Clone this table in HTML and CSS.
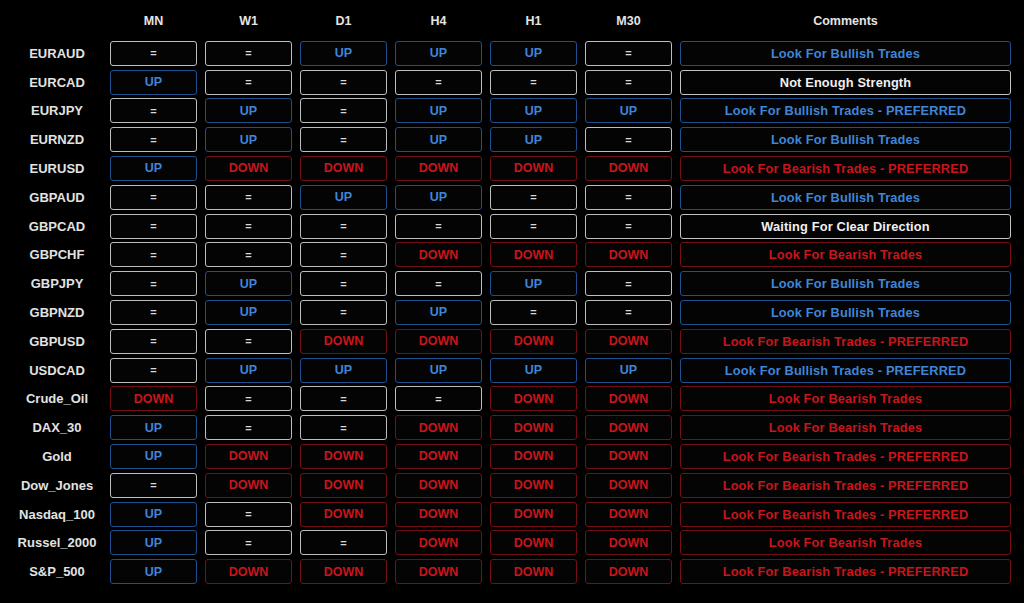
FILE: index.html
```html
<!DOCTYPE html>
<html>
<head>
<meta charset="utf-8">
<link rel="stylesheet" href="styles.css">
</head>
<body>
<div class="board">
  <div class="hd"></div><div class="hd">MN</div><div class="hd">W1</div><div class="hd">D1</div><div class="hd">H4</div><div class="hd">H1</div><div class="hd">M30</div><div class="hd">Comments</div>

  <div class="sym">EURAUD</div><div class="c n">=</div><div class="c n">=</div><div class="c u">UP</div><div class="c u">UP</div><div class="c u">UP</div><div class="c n">=</div><div class="c cm u">Look For Bullish Trades</div>
  <div class="sym">EURCAD</div><div class="c u">UP</div><div class="c n">=</div><div class="c n">=</div><div class="c n">=</div><div class="c n">=</div><div class="c n">=</div><div class="c cm w">Not Enough Strength</div>
  <div class="sym">EURJPY</div><div class="c n">=</div><div class="c u">UP</div><div class="c n">=</div><div class="c u">UP</div><div class="c u">UP</div><div class="c u">UP</div><div class="c cm u">Look For Bullish Trades - PREFERRED</div>
  <div class="sym">EURNZD</div><div class="c n">=</div><div class="c u">UP</div><div class="c n">=</div><div class="c u">UP</div><div class="c u">UP</div><div class="c n">=</div><div class="c cm u">Look For Bullish Trades</div>
  <div class="sym">EURUSD</div><div class="c u">UP</div><div class="c d">DOWN</div><div class="c d">DOWN</div><div class="c d">DOWN</div><div class="c d">DOWN</div><div class="c d">DOWN</div><div class="c cm d">Look For Bearish Trades - PREFERRED</div>
  <div class="sym">GBPAUD</div><div class="c n">=</div><div class="c n">=</div><div class="c u">UP</div><div class="c u">UP</div><div class="c n">=</div><div class="c n">=</div><div class="c cm u">Look For Bullish Trades</div>
  <div class="sym">GBPCAD</div><div class="c n">=</div><div class="c n">=</div><div class="c n">=</div><div class="c n">=</div><div class="c n">=</div><div class="c n">=</div><div class="c cm w">Waiting For Clear Direction</div>
  <div class="sym">GBPCHF</div><div class="c n">=</div><div class="c n">=</div><div class="c n">=</div><div class="c d">DOWN</div><div class="c d">DOWN</div><div class="c d">DOWN</div><div class="c cm d">Look For Bearish Trades</div>
  <div class="sym">GBPJPY</div><div class="c n">=</div><div class="c u">UP</div><div class="c n">=</div><div class="c n">=</div><div class="c u">UP</div><div class="c n">=</div><div class="c cm u">Look For Bullish Trades</div>
  <div class="sym">GBPNZD</div><div class="c n">=</div><div class="c u">UP</div><div class="c n">=</div><div class="c u">UP</div><div class="c n">=</div><div class="c n">=</div><div class="c cm u">Look For Bullish Trades</div>
  <div class="sym">GBPUSD</div><div class="c n">=</div><div class="c n">=</div><div class="c d">DOWN</div><div class="c d">DOWN</div><div class="c d">DOWN</div><div class="c d">DOWN</div><div class="c cm d">Look For Bearish Trades - PREFERRED</div>
  <div class="sym">USDCAD</div><div class="c n">=</div><div class="c u">UP</div><div class="c u">UP</div><div class="c u">UP</div><div class="c u">UP</div><div class="c u">UP</div><div class="c cm u">Look For Bullish Trades - PREFERRED</div>
  <div class="sym">Crude_Oil</div><div class="c d">DOWN</div><div class="c n">=</div><div class="c n">=</div><div class="c n">=</div><div class="c d">DOWN</div><div class="c d">DOWN</div><div class="c cm d">Look For Bearish Trades</div>
  <div class="sym">DAX_30</div><div class="c u">UP</div><div class="c n">=</div><div class="c n">=</div><div class="c d">DOWN</div><div class="c d">DOWN</div><div class="c d">DOWN</div><div class="c cm d">Look For Bearish Trades</div>
  <div class="sym">Gold</div><div class="c u">UP</div><div class="c d">DOWN</div><div class="c d">DOWN</div><div class="c d">DOWN</div><div class="c d">DOWN</div><div class="c d">DOWN</div><div class="c cm d">Look For Bearish Trades - PREFERRED</div>
  <div class="sym">Dow_Jones</div><div class="c n">=</div><div class="c d">DOWN</div><div class="c d">DOWN</div><div class="c d">DOWN</div><div class="c d">DOWN</div><div class="c d">DOWN</div><div class="c cm d">Look For Bearish Trades - PREFERRED</div>
  <div class="sym">Nasdaq_100</div><div class="c u">UP</div><div class="c n">=</div><div class="c d">DOWN</div><div class="c d">DOWN</div><div class="c d">DOWN</div><div class="c d">DOWN</div><div class="c cm d">Look For Bearish Trades - PREFERRED</div>
  <div class="sym">Russel_2000</div><div class="c u">UP</div><div class="c n">=</div><div class="c n">=</div><div class="c d">DOWN</div><div class="c d">DOWN</div><div class="c d">DOWN</div><div class="c cm d">Look For Bearish Trades</div>
  <div class="sym">S&amp;P_500</div><div class="c u">UP</div><div class="c d">DOWN</div><div class="c d">DOWN</div><div class="c d">DOWN</div><div class="c d">DOWN</div><div class="c d">DOWN</div><div class="c cm d">Look For Bearish Trades - PREFERRED</div>
</div>
</body>
</html>
```

FILE: styles.css
```css
html, body {
  margin: 0;
  padding: 0;
  background: #000;
  width: 1024px;
  height: 603px;
  overflow: hidden;
}
.board {
  display: grid;
  grid-template-columns: 90px repeat(6, 87px) 331px;
  grid-template-rows: 33px repeat(19, 25px);
  column-gap: 8px;
  row-gap: 3.8px;
  padding: 4px 0 0 12px;
  font-family: "Liberation Sans", Arial, sans-serif;
  font-weight: bold;
  font-size: 12px;
}
.hd {
  display: flex;
  align-items: center;
  justify-content: center;
  color: #e4e4e4;
  font-size: 12.5px;
}
.sym {
  display: flex;
  align-items: center;
  justify-content: center;
  color: #e2e2e2;
  font-size: 13px;
}
.c {
  display: flex;
  align-items: center;
  justify-content: center;
  box-sizing: border-box;
  border: 1.5px solid #bdbdbd;
  border-radius: 3px;
  background: #040404;
  font-size: 12.5px;
}
.cm {
  font-size: 12.8px;
  letter-spacing: 0.15px;
}
.n {
  color: #d8d8d8;
  font-size: 11px;
}
.w {
  color: #f0f0f0;
  border-color: #c4c4c4;
}
.u {
  color: #3f86d9;
  border-color: #1e4f8e;
}
.d {
  color: #c9151c;
  border-color: #741015;
}
```
